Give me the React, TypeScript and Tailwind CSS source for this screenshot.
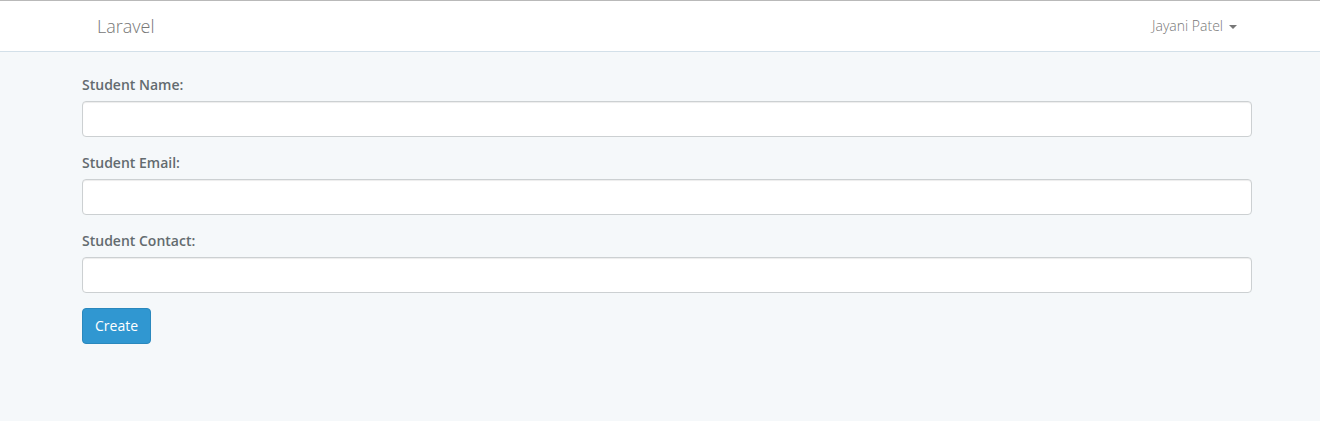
export default function App() {
  return (
    <div className="min-h-[421px] bg-[#f5f8fa] text-[#636b6f] text-[14px] leading-[1.6]" style={{ fontFamily: '"Open Sans", "Lato", sans-serif' }}>
      {/* Navbar */}
      <nav className="bg-white border-t border-t-[#b9b9b9] border-b border-b-[#d3e0e9] mb-[22px]">
        <div className="w-[1170px] ml-[82px] px-[15px] h-[50px] flex items-center justify-between">
          <a href="#" className="text-[18px] text-[#777] leading-[20px] font-light">Laravel</a>
          <a href="#" className="flex items-center gap-[6px] text-[#777] font-light">
            Jayani Patel
            <span className="inline-block w-0 h-0 border-l-[4px] border-r-[4px] border-t-[4px] border-l-transparent border-r-transparent border-t-[#777] mt-[2px]" />
          </a>
        </div>
      </nav>

      {/* Form */}
      <form className="w-[1170px] ml-[82px]">
        {["Student Name:", "Student Email:", "Student Contact:"].map((label) => (
          <div key={label} className="mb-[15px]">
            <label className="block font-semibold mb-[5px] leading-[22px]">{label}</label>
            <input type="text" className="block w-full h-[36px] bg-white border border-[#ccd0d2] rounded-[4px] px-3 shadow-[inset_0_1px_1px_rgba(0,0,0,0.075)] outline-none" />
          </div>
        ))}
        <button type="submit" className="h-[36px] px-[12px] bg-[#3097d1] border border-[#2a88bd] rounded-[4px] text-white text-[14px]">
          Create
        </button>
      </form>
    </div>
  );
}
